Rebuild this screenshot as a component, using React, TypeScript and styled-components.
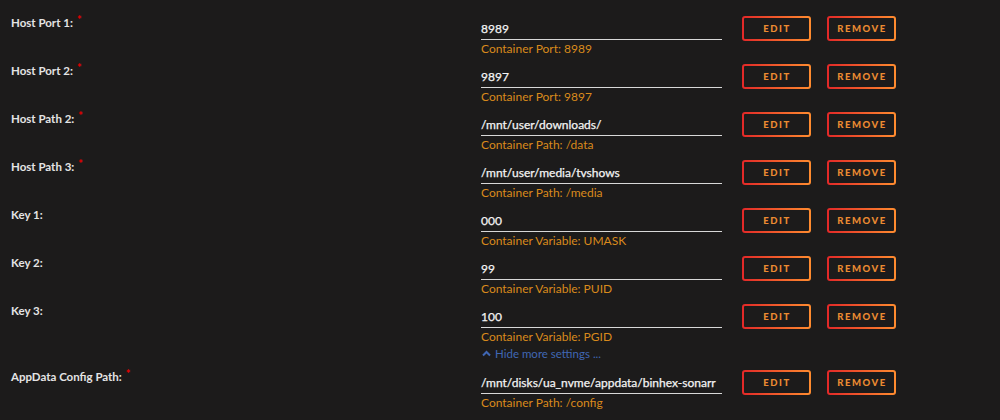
import React from 'react';
import styled, { createGlobalStyle } from 'styled-components';

const GlobalStyle = createGlobalStyle`
  body {
    margin: 0;
    background: #1c1b1b;
    font-family: Lato, "Open Sans", sans-serif;
  }
`;

interface Setting {
  label: string;
  value: string;
  hint: string;
  required?: boolean;
}

const settings: Setting[] = [
  { label: 'Host Port 1:', value: '8989', hint: 'Container Port: 8989', required: true },
  { label: 'Host Port 2:', value: '9897', hint: 'Container Port: 9897', required: true },
  { label: 'Host Path 2:', value: '/mnt/user/downloads/', hint: 'Container Path: /data', required: true },
  { label: 'Host Path 3:', value: '/mnt/user/media/tvshows', hint: 'Container Path: /media', required: true },
  { label: 'Key 1:', value: '000', hint: 'Container Variable: UMASK' },
  { label: 'Key 2:', value: '99', hint: 'Container Variable: PUID' },
  { label: 'Key 3:', value: '100', hint: 'Container Variable: PGID' }
];

const appData: Setting = {
  label: 'AppData Config Path:',
  value: '/mnt/disks/ua_nvme/appdata/binhex-sonarr',
  hint: 'Container Path: /config',
  required: true
};

const Page = styled.div`
  padding-top: 8px;
  width: 1000px;
  height: 420px;
  box-sizing: border-box;
  overflow: hidden;
`;

const Row = styled.div`
  display: flex;
  align-items: flex-start;
  height: 48px;
`;

const Label = styled.div`
  width: 470px;
  padding-left: 11px;
  margin-top: 8px;
  font-size: 11.5px;
  line-height: 14px;
  font-weight: 700;
  color: #e4e4e4;
`;

const Required = styled.sup`
  color: #e00000;
  font-size: 11px;
  font-weight: 900;
  margin-left: 4px;
  vertical-align: 3px;
  line-height: 0;
`;

const Field = styled.div`
  width: 241px;
  margin-top: 13px;
`;

const Value = styled.div`
  height: 19px;
  line-height: 16px;
  font-size: 12px;
  font-weight: 400;
  color: #f4f4f4;
  white-space: nowrap;
  -webkit-text-stroke: 0.25px #f4f4f4;
  border-bottom: 1px solid #d8d8d8;
  box-sizing: border-box;
`;

const Hint = styled.div`
  margin-top: 2px;
  font-size: 12px;
  line-height: 14px;
  color: #d98a1c;
`;

const Actions = styled.div`
  display: flex;
  gap: 16px;
  margin-left: 20px;
  margin-top: 8px;
`;

const Button = styled.button`
  width: 69px;
  height: 25px;
  padding: 0 0 0 1px;
  border: 2px solid transparent;
  border-radius: 3px;
  background:
    linear-gradient(#1c1b1b, #1c1b1b) padding-box,
    linear-gradient(90deg, #e22828, #ff8c2f) border-box;
  color: #ec8b32;
  font-family: Lato, "Open Sans", sans-serif;
  font-size: 9.5px;
  font-weight: 900;
  letter-spacing: 1.5px;
  text-transform: uppercase;
  cursor: pointer;
`;

const ToggleLine = styled.div`
  display: flex;
  align-items: center;
  height: 18px;
  padding: 1px 0 0 482px;
  box-sizing: border-box;
`;

const ToggleLink = styled.a`
  display: inline-flex;
  align-items: center;
  gap: 4px;
  font-size: 11.5px;
  line-height: 13px;
  color: #4067b4;
  cursor: pointer;
`;

function ChevronUp (): React.ReactElement {
  return (
    <svg width='9' height='7' viewBox='0 0 9 7'>
      <path d='M1 5.5 L4.5 2 L8 5.5' fill='none' stroke='#4067b4' strokeWidth='2' />
    </svg>
  );
}

function SettingRow ({ label, value, hint, required }: Setting): React.ReactElement {
  return (
    <Row>
      <Label>
        {label}
        {required && <Required>*</Required>}
      </Label>
      <Field>
        <Value>{value}</Value>
        <Hint>{hint}</Hint>
      </Field>
      <Actions>
        <Button>Edit</Button>
        <Button>Remove</Button>
      </Actions>
    </Row>
  );
}

export default function App (): React.ReactElement {
  return (
    <>
      <GlobalStyle />
      <Page>
        {settings.map((s) => <SettingRow key={s.label} {...s} />)}
        <ToggleLine>
          <ToggleLink>
            <ChevronUp />
            Hide more settings ...
          </ToggleLink>
        </ToggleLine>
        <SettingRow {...appData} />
      </Page>
    </>
  );
}
